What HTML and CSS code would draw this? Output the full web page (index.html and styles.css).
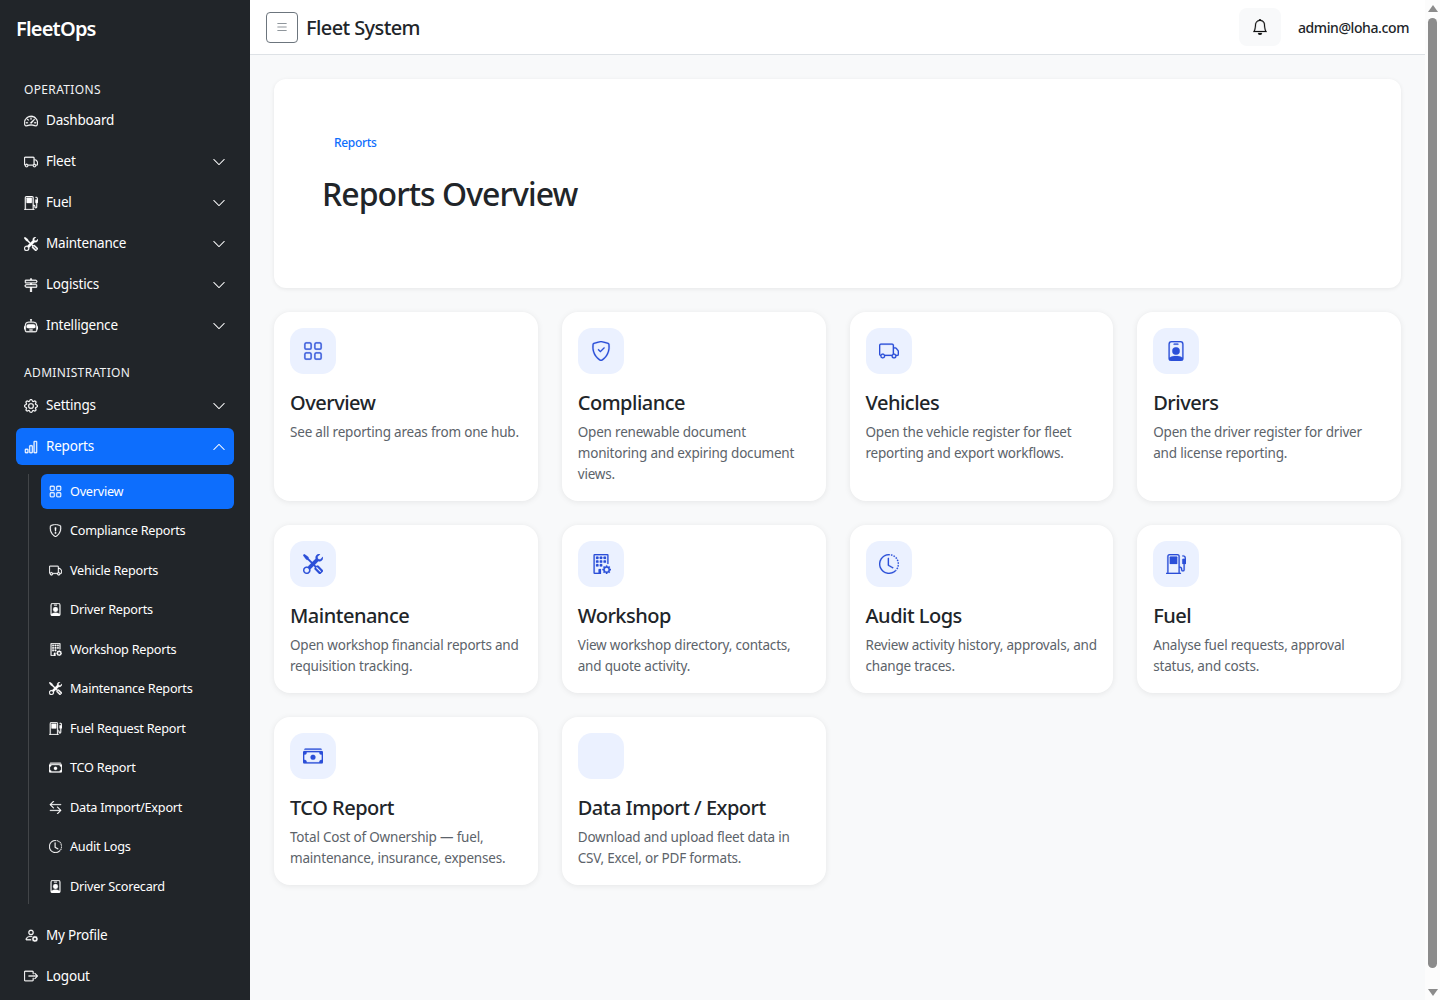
FILE: index.html
```html
<!DOCTYPE html>
<html lang="en">
<head>
    <meta charset="utf-8">
    <title>Reports Overview</title>
    <link rel="stylesheet" href="styles.css">
</head>
<body>
    <svg class="sprite" xmlns="http://www.w3.org/2000/svg">
        <symbol id="i-speedometer" viewBox="0 0 16 16"><path d="M8 4a.5.5 0 0 1 .5.5V6a.5.5 0 0 1-1 0V4.5A.5.5 0 0 1 8 4M3.732 5.732a.5.5 0 0 1 .707 0l.915.914a.5.5 0 1 1-.708.708l-.914-.915a.5.5 0 0 1 0-.707M2 10a.5.5 0 0 1 .5-.5h1.586a.5.5 0 0 1 0 1H2.5A.5.5 0 0 1 2 10m9.5 0a.5.5 0 0 1 .5-.5h1.5a.5.5 0 0 1 0 1H12a.5.5 0 0 1-.5-.5m.754-4.246a.39.39 0 0 0-.527-.02L7.547 9.31a.91.91 0 1 0 1.302 1.258l3.434-4.297a.39.39 0 0 0-.029-.518z"/><path d="M0 10a8 8 0 1 1 15.547 2.661c-.442 1.253-1.845 1.602-2.932 1.25C11.309 13.488 9.475 13 8 13c-1.474 0-3.31.488-4.615.911-1.087.352-2.49.003-2.932-1.25A8 8 0 0 1 0 10m8-7a7 7 0 0 0-6.603 9.329c.203.575.923.876 1.68.63C4.397 12.533 6.358 12 8 12s3.604.532 4.923.96c.757.245 1.477-.056 1.68-.631A7 7 0 0 0 8 3"/></symbol>
        <symbol id="i-truck" viewBox="0 0 16 16"><path d="M0 3.5A1.5 1.5 0 0 1 1.5 2h9A1.5 1.5 0 0 1 12 3.5V5h1.02a1.5 1.5 0 0 1 1.17.563l1.481 1.85a1.5 1.5 0 0 1 .329.938V10.5a1.5 1.5 0 0 1-1.5 1.5H14a2 2 0 1 1-4 0H5a2 2 0 1 1-3.998-.085A1.5 1.5 0 0 1 0 10.5zm1.294 7.456A2 2 0 0 1 4.732 11h5.536a2 2 0 0 1 .732-.732V3.5a.5.5 0 0 0-.5-.5h-9a.5.5 0 0 0-.5.5v7a.5.5 0 0 0 .294.456M12 10a2 2 0 0 1 1.732 1h.768a.5.5 0 0 0 .5-.5V8.35a.5.5 0 0 0-.11-.312l-1.48-1.85A.5.5 0 0 0 13.02 6H12zm-9 1a1 1 0 1 0 0 2 1 1 0 0 0 0-2m9 0a1 1 0 1 0 0 2 1 1 0 0 0 0-2"/></symbol>
        <symbol id="i-fuel" viewBox="0 0 16 16"><path d="M3 2.5a.5.5 0 0 1 .5-.5h5a.5.5 0 0 1 .5.5v5a.5.5 0 0 1-.5.5h-5a.5.5 0 0 1-.5-.5z"/><path d="M1 2a2 2 0 0 1 2-2h6a2 2 0 0 1 2 2v8a2 2 0 0 1 2 2v.5a.5.5 0 0 0 1 0V8h-.5a.5.5 0 0 1-.5-.5V4.375a.5.5 0 0 1 .5-.5h1.495c-.011-.476-.053-.894-.201-1.222a.97.97 0 0 0-.394-.458c-.184-.11-.464-.195-.9-.195a.5.5 0 0 1 0-1q.846-.002 1.412.336c.383.228.634.551.794.907.295.655.294 1.465.294 2.081v3.175a.5.5 0 0 1-.5.501H15v4.5a1.5 1.5 0 0 1-3 0V12a1 1 0 0 0-1-1v4h.5a.5.5 0 0 1 0 1H.5a.5.5 0 0 1 0-1H1zm9 0a1 1 0 0 0-1-1H3a1 1 0 0 0-1 1v13h8z"/></symbol>
        <symbol id="i-tools" viewBox="0 0 16 16"><path d="M1 0 0 1l2.2 3.081a1 1 0 0 0 .815.419h.07a1 1 0 0 1 .708.293l2.675 2.675-2.617 2.654A3.003 3.003 0 0 0 0 13a3 3 0 1 0 5.878-.851l2.654-2.617.968.968-.305.914a1 1 0 0 0 .242 1.023l3.27 3.27a.997.997 0 0 0 1.414 0l1.586-1.586a.997.997 0 0 0 0-1.414l-3.27-3.27a1 1 0 0 0-1.023-.242L10.5 9.5l-.96-.96 2.68-2.643A3.005 3.005 0 0 0 16 3q0-.405-.102-.777l-2.14 2.141L12 4l-.364-1.757L13.777.102a3 3 0 0 0-3.675 3.68L7.462 6.46 4.793 3.793a1 1 0 0 1-.293-.707v-.071a1 1 0 0 0-.419-.814zm9.646 10.646a.5.5 0 0 1 .708 0l2.914 2.915a.5.5 0 0 1-.707.707l-2.915-2.914a.5.5 0 0 1 0-.708M3 11l.471.242.529.026.287.445.445.287.026.529L5 13l-.242.471-.026.529-.445.287-.287.445-.529.026L3 15l-.471-.242L2 14.732l-.287-.445L1.268 14l-.026-.529L1 13l.242-.471.026-.529.445-.287.287-.445.529-.026z"/></symbol>
        <symbol id="i-signpost" viewBox="0 0 16 16"><path d="M7 1.414V2H2a1 1 0 0 0-1 1v2a1 1 0 0 0 1 1h5v1H2.5a1 1 0 0 0-.8.4L.725 8.7a.5.5 0 0 0 0 .6l.975 1.3a1 1 0 0 0 .8.4H7v5h2v-5h5a1 1 0 0 0 1-1V8a1 1 0 0 0-1-1H9V6h4.5a1 1 0 0 0 .8-.4l.975-1.3a.5.5 0 0 0 0-.6l-.975-1.3a1 1 0 0 0-.8-.4H9v-.586a1 1 0 0 0-2 0M13.5 3l.75 1-.75 1H2V3zm.5 5v2H2.5l-.75-1 .75-1z"/></symbol>
        <symbol id="i-robot" viewBox="0 0 16 16"><path d="M6 12.5a.5.5 0 0 1 .5-.5h3a.5.5 0 0 1 0 1h-3a.5.5 0 0 1-.5-.5M3 8.062C3 6.76 4.235 5.765 5.53 5.886a26.6 26.6 0 0 0 4.94 0C11.765 5.765 13 6.76 13 8.062v1.157a.93.93 0 0 1-.765.935c-.845.147-2.34.346-4.235.346s-3.39-.2-4.235-.346A.93.93 0 0 1 3 9.219z"/><path d="M8.5 1.866a1 1 0 1 0-1 0V3h-2A4.5 4.5 0 0 0 1 7.5V8a1 1 0 0 0-1 1v2a1 1 0 0 0 1 1v1a2 2 0 0 0 2 2h10a2 2 0 0 0 2-2v-1a1 1 0 0 0 1-1V9a1 1 0 0 0-1-1v-.5A4.5 4.5 0 0 0 10.5 3h-2zM14 7.5V13a1 1 0 0 1-1 1H3a1 1 0 0 1-1-1V7.5A3.5 3.5 0 0 1 5.5 4h5A3.5 3.5 0 0 1 14 7.5"/></symbol>
        <symbol id="i-gear" viewBox="0 0 16 16"><path d="M8 4.754a3.246 3.246 0 1 0 0 6.492 3.246 3.246 0 0 0 0-6.492M5.754 8a2.246 2.246 0 1 1 4.492 0 2.246 2.246 0 0 1-4.492 0"/><path d="M9.796 1.343c-.527-1.79-3.065-1.79-3.592 0l-.094.319a.873.873 0 0 1-1.255.52l-.292-.16c-1.64-.892-3.433.902-2.54 2.541l.159.292a.873.873 0 0 1-.52 1.255l-.319.094c-1.79.527-1.79 3.065 0 3.592l.319.094a.873.873 0 0 1 .52 1.255l-.16.292c-.892 1.64.901 3.434 2.541 2.54l.292-.159a.873.873 0 0 1 1.255.52l.094.319c.527 1.79 3.065 1.79 3.592 0l.094-.319a.873.873 0 0 1 1.255-.52l.292.16c1.64.893 3.434-.902 2.54-2.541l-.159-.292a.873.873 0 0 1 .52-1.255l.319-.094c1.79-.527 1.79-3.065 0-3.592l-.319-.094a.873.873 0 0 1-.52-1.255l.16-.292c.893-1.64-.902-3.433-2.541-2.54l-.292.159a.873.873 0 0 1-1.255-.52zm-2.633.283c.246-.835 1.428-.835 1.674 0l.094.319a1.873 1.873 0 0 0 2.693 1.115l.291-.16c.764-.415 1.6.42 1.184 1.185l-.159.292a1.873 1.873 0 0 0 1.116 2.692l.318.094c.835.246.835 1.428 0 1.674l-.319.094a1.873 1.873 0 0 0-1.115 2.693l.16.291c.415.764-.42 1.6-1.185 1.184l-.291-.159a1.873 1.873 0 0 0-2.693 1.116l-.094.318c-.246.835-1.428.835-1.674 0l-.094-.319a1.873 1.873 0 0 0-2.692-1.115l-.292.16c-.764.415-1.6-.42-1.184-1.185l.159-.291A1.873 1.873 0 0 0 1.945 8.93l-.319-.094c-.835-.246-.835-1.428 0-1.674l.319-.094A1.873 1.873 0 0 0 3.06 4.377l-.16-.292c-.415-.764.42-1.6 1.185-1.184l.292.159a1.873 1.873 0 0 0 2.692-1.115z"/></symbol>
        <symbol id="i-bars" viewBox="0 0 16 16"><path d="M4 11H2v3h2zm5-4H7v7h2zm5-5v12h-2V2zm-2-1a1 1 0 0 0-1 1v12a1 1 0 0 0 1 1h2a1 1 0 0 0 1-1V2a1 1 0 0 0-1-1zM6 7a1 1 0 0 1 1-1h2a1 1 0 0 1 1 1v7a1 1 0 0 1-1 1H7a1 1 0 0 1-1-1zm-5 4a1 1 0 0 1 1-1h2a1 1 0 0 1 1 1v3a1 1 0 0 1-1 1H2a1 1 0 0 1-1-1z"/></symbol>
        <symbol id="i-grid" viewBox="0 0 16 16"><path d="M1 2.5A1.5 1.5 0 0 1 2.5 1h3A1.5 1.5 0 0 1 7 2.5v3A1.5 1.5 0 0 1 5.5 7h-3A1.5 1.5 0 0 1 1 5.5zM2.5 2a.5.5 0 0 0-.5.5v3a.5.5 0 0 0 .5.5h3a.5.5 0 0 0 .5-.5v-3a.5.5 0 0 0-.5-.5zm6.5.5A1.5 1.5 0 0 1 10.5 1h3A1.5 1.5 0 0 1 15 2.5v3A1.5 1.5 0 0 1 13.5 7h-3A1.5 1.5 0 0 1 9 5.5zm1.5-.5a.5.5 0 0 0-.5.5v3a.5.5 0 0 0 .5.5h3a.5.5 0 0 0 .5-.5v-3a.5.5 0 0 0-.5-.5zM1 10.5A1.5 1.5 0 0 1 2.5 9h3A1.5 1.5 0 0 1 7 10.5v3A1.5 1.5 0 0 1 5.5 15h-3A1.5 1.5 0 0 1 1 13.5zm1.5-.5a.5.5 0 0 0-.5.5v3a.5.5 0 0 0 .5.5h3a.5.5 0 0 0 .5-.5v-3a.5.5 0 0 0-.5-.5zm6.5.5A1.5 1.5 0 0 1 10.5 9h3a1.5 1.5 0 0 1 1.5 1.5v3a1.5 1.5 0 0 1-1.5 1.5h-3A1.5 1.5 0 0 1 9 13.5zm1.5-.5a.5.5 0 0 0-.5.5v3a.5.5 0 0 0 .5.5h3a.5.5 0 0 0 .5-.5v-3a.5.5 0 0 0-.5-.5z"/></symbol>
        <symbol id="i-shield-alert" viewBox="0 0 16 16"><path d="M5.338 1.59a61 61 0 0 0-2.837.856.48.48 0 0 0-.328.39c-.554 4.157.726 7.19 2.253 9.188a10.7 10.7 0 0 0 2.287 2.233c.346.244.652.42.893.533q.18.085.293.118a1 1 0 0 0 .101.025 1 1 0 0 0 .1-.025q.114-.034.294-.118c.24-.113.547-.29.893-.533a10.7 10.7 0 0 0 2.287-2.233c1.527-1.997 2.807-5.031 2.253-9.188a.48.48 0 0 0-.328-.39c-.651-.213-1.75-.56-2.837-.855C9.552 1.29 8.531 1.067 8 1.067c-.53 0-1.552.223-2.662.524zM5.072.56C6.157.265 7.31 0 8 0s1.843.265 2.928.56c1.11.3 2.229.655 2.887.87a1.54 1.54 0 0 1 1.044 1.262c.596 4.477-.787 7.795-2.465 9.99a11.8 11.8 0 0 1-2.517 2.453 7 7 0 0 1-1.048.625c-.28.132-.581.24-.829.24s-.548-.108-.829-.24a7 7 0 0 1-1.048-.625 11.8 11.8 0 0 1-2.517-2.453C1.928 10.487.545 7.169 1.141 2.692A1.54 1.54 0 0 1 2.185 1.43 63 63 0 0 1 5.072.56"/><path d="M7.001 11a1 1 0 1 1 2 0 1 1 0 0 1-2 0M7.1 4.995a.905.905 0 1 1 1.8 0l-.35 3.507a.553.553 0 0 1-1.1 0z"/></symbol>
        <symbol id="i-shield-check" viewBox="0 0 16 16"><path d="M5.338 1.59a61 61 0 0 0-2.837.856.48.48 0 0 0-.328.39c-.554 4.157.726 7.19 2.253 9.188a10.7 10.7 0 0 0 2.287 2.233c.346.244.652.42.893.533q.18.085.293.118a1 1 0 0 0 .101.025 1 1 0 0 0 .1-.025q.114-.034.294-.118c.24-.113.547-.29.893-.533a10.7 10.7 0 0 0 2.287-2.233c1.527-1.997 2.807-5.031 2.253-9.188a.48.48 0 0 0-.328-.39c-.651-.213-1.75-.56-2.837-.855C9.552 1.29 8.531 1.067 8 1.067c-.53 0-1.552.223-2.662.524zM5.072.56C6.157.265 7.31 0 8 0s1.843.265 2.928.56c1.11.3 2.229.655 2.887.87a1.54 1.54 0 0 1 1.044 1.262c.596 4.477-.787 7.795-2.465 9.99a11.8 11.8 0 0 1-2.517 2.453 7 7 0 0 1-1.048.625c-.28.132-.581.24-.829.24s-.548-.108-.829-.24a7 7 0 0 1-1.048-.625 11.8 11.8 0 0 1-2.517-2.453C1.928 10.487.545 7.169 1.141 2.692A1.54 1.54 0 0 1 2.185 1.43 63 63 0 0 1 5.072.56"/><path d="M10.854 5.146a.5.5 0 0 1 0 .708l-3 3a.5.5 0 0 1-.708 0l-1.5-1.5a.5.5 0 1 1 .708-.708L7.5 7.793l2.646-2.647a.5.5 0 0 1 .708 0"/></symbol>
        <symbol id="i-badge" viewBox="0 0 16 16"><path d="M6.5 2a.5.5 0 0 0 0 1h3a.5.5 0 0 0 0-1zM11 8a3 3 0 1 1-6 0 3 3 0 0 1 6 0"/><path d="M4.5 0A2.5 2.5 0 0 0 2 2.5V14a2 2 0 0 0 2 2h8a2 2 0 0 0 2-2V2.5A2.5 2.5 0 0 0 11.5 0zM3 2.5A1.5 1.5 0 0 1 4.5 1h7A1.5 1.5 0 0 1 13 2.5v10.795a4.2 4.2 0 0 0-.776-.492C11.392 12.387 10.063 12 8 12s-3.392.387-4.224.803a4.2 4.2 0 0 0-.776.492z"/></symbol>
        <symbol id="i-building-gear" viewBox="0 0 16 16"><path d="M2 1a1 1 0 0 1 1-1h10a1 1 0 0 1 1 1v6.5a.5.5 0 0 1-1 0V1H3v14h3v-2.5a.5.5 0 0 1 .5-.5H8v4H3a1 1 0 0 1-1-1z"/><rect x="4" y="2" width="2" height="2" rx=".5"/><rect x="7" y="2" width="2" height="2" rx=".5"/><rect x="10" y="2" width="2" height="2" rx=".5"/><rect x="4" y="5" width="2" height="2" rx=".5"/><rect x="7" y="5" width="2" height="2" rx=".5"/><rect x="10" y="5" width="2" height="2" rx=".5"/><rect x="4" y="8" width="2" height="2" rx=".5"/><rect x="7" y="8" width="2" height="2" rx=".5"/><path d="M11.886 9.46c.18-.613 1.048-.613 1.229 0l.043.148a.64.64 0 0 0 .921.382l.136-.074c.561-.306 1.175.308.87.869l-.075.136a.64.64 0 0 0 .382.92l.149.045c.612.18.612 1.048 0 1.229l-.15.043a.64.64 0 0 0-.38.921l.074.136c.305.561-.309 1.175-.87.87l-.136-.075a.64.64 0 0 0-.92.382l-.045.149c-.18.612-1.048.612-1.229 0l-.043-.15a.64.64 0 0 0-.921-.38l-.136.074c-.561.305-1.175-.309-.87-.87l.075-.136a.64.64 0 0 0-.382-.92l-.148-.045c-.613-.18-.613-1.048 0-1.229l.148-.043a.64.64 0 0 0 .382-.921l-.074-.136c-.306-.561.308-1.175.869-.87l.136.075a.64.64 0 0 0 .92-.382zM14 12.5a1.5 1.5 0 1 0-3 0 1.5 1.5 0 0 0 3 0"/></symbol>
        <symbol id="i-clock" viewBox="0 0 16 16"><path d="M8.515 1.019A7 7 0 0 0 8 1V0a8 8 0 0 1 .589.022zm2.004.45a7 7 0 0 0-.985-.299l.219-.976q.576.129 1.126.342zm1.37.71a7 7 0 0 0-.439-.27l.493-.87a8 8 0 0 1 .979.654l-.615.789a7 7 0 0 0-.418-.302zm1.834 1.79a7 7 0 0 0-.653-.796l.724-.69q.406.429.747.91zm.744 1.352a7 7 0 0 0-.214-.468l.893-.45a8 8 0 0 1 .45 1.088l-.95.313a7 7 0 0 0-.179-.483m.53 2.507a7 7 0 0 0-.1-1.025l.985-.17q.1.58.116 1.17zm-.131 1.538q.05-.254.081-.51l.993.123a8 8 0 0 1-.23 1.155l-.964-.267q.069-.247.12-.501m-.952 2.379q.276-.436.486-.908l.914.405q-.24.54-.555 1.038zm-.964 1.205q.183-.183.35-.378l.758.653a8 8 0 0 1-.401.432z"/><path d="M8 1a7 7 0 1 0 4.95 11.95l.707.707A8.001 8.001 0 1 1 8 0z"/><path d="M7.5 3a.5.5 0 0 1 .5.5v5.21l3.248 1.856a.5.5 0 0 1-.496.868l-3.5-2A.5.5 0 0 1 7 9V3.5a.5.5 0 0 1 .5-.5"/></symbol>
        <symbol id="i-cash" viewBox="0 0 16 16"><path d="M1 3a1 1 0 0 1 1-1h12a1 1 0 0 1 1 1zm7 8a2 2 0 1 0 0-4 2 2 0 0 0 0 4"/><path d="M0 5a1 1 0 0 1 1-1h14a1 1 0 0 1 1 1v8a1 1 0 0 1-1 1H1a1 1 0 0 1-1-1zm3 0a2 2 0 0 1-2 2v4a2 2 0 0 1 2 2h10a2 2 0 0 1 2-2V7a2 2 0 0 1-2-2z"/></symbol>
        <symbol id="i-swap" viewBox="0 0 16 16"><path d="M1 11.5a.5.5 0 0 0 .5.5h11.793l-3.147 3.146a.5.5 0 0 0 .708.708l4-4a.5.5 0 0 0 0-.708l-4-4a.5.5 0 0 0-.708.708L13.293 11H1.5a.5.5 0 0 0-.5.5m14-7a.5.5 0 0 1-.5.5H2.707l3.147 3.146a.5.5 0 1 1-.708.708l-4-4a.5.5 0 0 1 0-.708l4-4a.5.5 0 1 1 .708.708L2.707 4H14.5a.5.5 0 0 1 .5.5"/></symbol>
        <symbol id="i-person-gear" viewBox="0 0 16 16"><path d="M11 5a3 3 0 1 1-6 0 3 3 0 0 1 6 0M8 7a2 2 0 1 0 0-4 2 2 0 0 0 0 4m.256 7a4.5 4.5 0 0 1-.229-1.004H3c.001-.246.154-.986.832-1.664C4.484 10.68 5.711 10 8 10q.39 0 .74.025c.226-.341.496-.65.804-.918Q8.844 9.002 8 9c-5 0-6 3-6 4s1 1 1 1z"/><path d="M11.886 9.46c.18-.613 1.048-.613 1.229 0l.043.148a.64.64 0 0 0 .921.382l.136-.074c.561-.306 1.175.308.87.869l-.075.136a.64.64 0 0 0 .382.92l.149.045c.612.18.612 1.048 0 1.229l-.15.043a.64.64 0 0 0-.38.921l.074.136c.305.561-.309 1.175-.87.87l-.136-.075a.64.64 0 0 0-.92.382l-.045.149c-.18.612-1.048.612-1.229 0l-.043-.15a.64.64 0 0 0-.921-.38l-.136.074c-.561.305-1.175-.309-.87-.87l.075-.136a.64.64 0 0 0-.382-.92l-.148-.045c-.613-.18-.613-1.048 0-1.229l.148-.043a.64.64 0 0 0 .382-.921l-.074-.136c-.306-.561.308-1.175.869-.87l.136.075a.64.64 0 0 0 .92-.382zM14 12.5a1.5 1.5 0 1 0-3 0 1.5 1.5 0 0 0 3 0"/></symbol>
        <symbol id="i-logout" viewBox="0 0 16 16"><path d="M10 12.5a.5.5 0 0 1-.5.5h-8a.5.5 0 0 1-.5-.5v-9a.5.5 0 0 1 .5-.5h8a.5.5 0 0 1 .5.5v2a.5.5 0 0 0 1 0v-2A1.5 1.5 0 0 0 9.5 2h-8A1.5 1.5 0 0 0 0 3.5v9A1.5 1.5 0 0 0 1.5 14h8a1.5 1.5 0 0 0 1.5-1.5v-2a.5.5 0 0 0-1 0z"/><path d="M15.854 8.354a.5.5 0 0 0 0-.708l-3-3a.5.5 0 0 0-.708.708L14.293 7.5H5.5a.5.5 0 0 0 0 1h8.793l-2.147 2.146a.5.5 0 0 0 .708.708z"/></symbol>
        <symbol id="i-bell" viewBox="0 0 16 16"><path d="M8 16a2 2 0 0 0 2-2H6a2 2 0 0 0 2 2M8 1.918l-.797.161A4 4 0 0 0 4 6c0 .628-.134 2.197-.459 3.742-.16.767-.376 1.566-.663 2.258h10.244c-.287-.692-.502-1.49-.663-2.258C12.134 8.197 12 6.628 12 6a4 4 0 0 0-3.203-3.92zM14.22 12c.223.447.481.801.78 1H1c.299-.199.557-.553.78-1C2.68 10.2 3 6.88 3 6c0-2.42 1.72-4.44 4.005-4.901a1 1 0 1 1 1.99 0A5 5 0 0 1 13 6c0 .88.32 4.2 1.22 6"/></symbol>
        <symbol id="i-chevron" viewBox="0 0 16 16"><path d="M1.646 4.646a.5.5 0 0 1 .708 0L8 10.293l5.646-5.647a.5.5 0 0 1 .708.708l-6 6a.5.5 0 0 1-.708 0l-6-6a.5.5 0 0 1 0-.708"/></symbol>
        <symbol id="i-list" viewBox="0 0 16 16"><path d="M2.5 12a.5.5 0 0 1 .5-.5h10a.5.5 0 0 1 0 1H3a.5.5 0 0 1-.5-.5m0-4a.5.5 0 0 1 .5-.5h10a.5.5 0 0 1 0 1H3a.5.5 0 0 1-.5-.5m0-4a.5.5 0 0 1 .5-.5h10a.5.5 0 0 1 0 1H3a.5.5 0 0 1-.5-.5"/></symbol>
    </svg>

    <aside class="sidebar">
        <div class="brand">FleetOps</div>

        <div class="nav-label">OPERATIONS</div>
        <ul class="nav">
            <li><a class="nav-link"><svg class="nav-icon"><use href="#i-speedometer"/></svg>Dashboard</a></li>
            <li><a class="nav-link"><svg class="nav-icon"><use href="#i-truck"/></svg>Fleet<svg class="chevron"><use href="#i-chevron"/></svg></a></li>
            <li><a class="nav-link"><svg class="nav-icon"><use href="#i-fuel"/></svg>Fuel<svg class="chevron"><use href="#i-chevron"/></svg></a></li>
            <li><a class="nav-link"><svg class="nav-icon"><use href="#i-tools"/></svg>Maintenance<svg class="chevron"><use href="#i-chevron"/></svg></a></li>
            <li><a class="nav-link"><svg class="nav-icon"><use href="#i-signpost"/></svg>Logistics<svg class="chevron"><use href="#i-chevron"/></svg></a></li>
            <li><a class="nav-link"><svg class="nav-icon"><use href="#i-robot"/></svg>Intelligence<svg class="chevron"><use href="#i-chevron"/></svg></a></li>
        </ul>

        <div class="nav-label nav-label-admin">ADMINISTRATION</div>
        <ul class="nav">
            <li><a class="nav-link"><svg class="nav-icon"><use href="#i-gear"/></svg>Settings<svg class="chevron"><use href="#i-chevron"/></svg></a></li>
            <li>
                <a class="nav-link active"><svg class="nav-icon"><use href="#i-bars"/></svg>Reports<svg class="chevron chevron-up"><use href="#i-chevron"/></svg></a>
                <ul class="subnav">
                    <li><a class="sub-link active"><svg class="sub-icon"><use href="#i-grid"/></svg>Overview</a></li>
                    <li><a class="sub-link"><svg class="sub-icon"><use href="#i-shield-alert"/></svg>Compliance Reports</a></li>
                    <li><a class="sub-link"><svg class="sub-icon"><use href="#i-truck"/></svg>Vehicle Reports</a></li>
                    <li><a class="sub-link"><svg class="sub-icon"><use href="#i-badge"/></svg>Driver Reports</a></li>
                    <li><a class="sub-link"><svg class="sub-icon"><use href="#i-building-gear"/></svg>Workshop Reports</a></li>
                    <li><a class="sub-link"><svg class="sub-icon"><use href="#i-tools"/></svg>Maintenance Reports</a></li>
                    <li><a class="sub-link"><svg class="sub-icon"><use href="#i-fuel"/></svg>Fuel Request Report</a></li>
                    <li><a class="sub-link"><svg class="sub-icon"><use href="#i-cash"/></svg>TCO Report</a></li>
                    <li><a class="sub-link"><svg class="sub-icon"><use href="#i-swap"/></svg>Data Import/Export</a></li>
                    <li><a class="sub-link"><svg class="sub-icon"><use href="#i-clock"/></svg>Audit Logs</a></li>
                    <li><a class="sub-link"><svg class="sub-icon"><use href="#i-badge"/></svg>Driver Scorecard</a></li>
                </ul>
            </li>
        </ul>

        <ul class="nav nav-bottom">
            <li><a class="nav-link"><svg class="nav-icon"><use href="#i-person-gear"/></svg>My Profile</a></li>
            <li><a class="nav-link"><svg class="nav-icon"><use href="#i-logout"/></svg>Logout</a></li>
        </ul>
    </aside>

    <div class="main">
        <header class="topbar">
            <button class="toggler"><svg class="toggler-icon"><use href="#i-list"/></svg></button>
            <div class="topbar-title">Fleet System</div>
            <div class="bell"><svg class="bell-icon"><use href="#i-bell"/></svg></div>
            <div class="user">admin@loha.com</div>
        </header>

        <main class="content">
            <section class="hero">
                <div class="crumb">Reports</div>
                <h1 class="hero-title">Reports Overview</h1>
            </section>

            <section class="card-grid">
                <article class="card">
                    <div class="card-icon"><svg><use href="#i-grid"/></svg></div>
                    <h2 class="card-title">Overview</h2>
                    <p class="card-text">See all reporting areas from one hub.</p>
                </article>
                <article class="card">
                    <div class="card-icon"><svg><use href="#i-shield-check"/></svg></div>
                    <h2 class="card-title">Compliance</h2>
                    <p class="card-text">Open renewable document monitoring and expiring document views.</p>
                </article>
                <article class="card">
                    <div class="card-icon"><svg><use href="#i-truck"/></svg></div>
                    <h2 class="card-title">Vehicles</h2>
                    <p class="card-text">Open the vehicle register for fleet reporting and export workflows.</p>
                </article>
                <article class="card">
                    <div class="card-icon"><svg><use href="#i-badge"/></svg></div>
                    <h2 class="card-title">Drivers</h2>
                    <p class="card-text">Open the driver register for driver and license reporting.</p>
                </article>
                <article class="card">
                    <div class="card-icon"><svg><use href="#i-tools"/></svg></div>
                    <h2 class="card-title">Maintenance</h2>
                    <p class="card-text">Open workshop financial reports and requisition tracking.</p>
                </article>
                <article class="card">
                    <div class="card-icon"><svg><use href="#i-building-gear"/></svg></div>
                    <h2 class="card-title">Workshop</h2>
                    <p class="card-text">View workshop directory, contacts, and quote activity.</p>
                </article>
                <article class="card">
                    <div class="card-icon"><svg><use href="#i-clock"/></svg></div>
                    <h2 class="card-title">Audit Logs</h2>
                    <p class="card-text">Review activity history, approvals, and change traces.</p>
                </article>
                <article class="card">
                    <div class="card-icon"><svg><use href="#i-fuel"/></svg></div>
                    <h2 class="card-title">Fuel</h2>
                    <p class="card-text">Analyse fuel requests, approval status, and costs.</p>
                </article>
                <article class="card">
                    <div class="card-icon"><svg><use href="#i-cash"/></svg></div>
                    <h2 class="card-title">TCO Report</h2>
                    <p class="card-text">Total Cost of Ownership — fuel, maintenance, insurance, expenses.</p>
                </article>
                <article class="card">
                    <div class="card-icon"></div>
                    <h2 class="card-title">Data Import / Export</h2>
                    <p class="card-text">Download and upload fleet data in CSV, Excel, or PDF formats.</p>
                </article>
            </section>
        </main>
    </div>

    <div class="scrollbar">
        <div class="scroll-arrow"></div>
        <div class="scroll-thumb"></div>
        <div class="scroll-arrow scroll-arrow-down"></div>
    </div>
</body>
</html>
```

FILE: styles.css
```css
* {
    box-sizing: border-box;
}

html, body {
    height: 100%;
}

body {
    display: flex;
    height: 1000px;
    margin: 0;
    overflow: hidden;
    background-color: #f8f9fa;
    color: #212529;
    font-family: 'Noto Sans', 'Open Sans', sans-serif;
    font-size: 14px;
    line-height: 1.5;
}

.sprite {
    display: none;
}

ul {
    margin: 0;
    padding: 0;
    list-style: none;
}

/* sidebar */
.sidebar {
    flex: 0 0 250px;
    height: 1000px;
    padding: 14px 16px 0;
    overflow: hidden;
    background-color: #212529;
    color: #fff;
}

.brand {
    height: 30px;
    margin-bottom: 37px;
    font-size: 20px;
    font-weight: 600;
    line-height: 30px;
    letter-spacing: -0.8px;
}

.nav-label {
    height: 18px;
    margin: 0 8px 3px;
    font-size: 12px;
    line-height: 18px;
    letter-spacing: 0.35px;
    color: #f1f3f5;
}

.nav-label-admin {
    margin-top: 20px;
    margin-bottom: 5px;
}

.nav {
    display: flex;
    flex-direction: column;
    gap: 4px;
}

.nav-bottom {
    margin-top: 12.5px;
}

.nav-link {
    display: flex;
    align-items: center;
    gap: 8px;
    height: 37px;
    padding: 8px;
    border-radius: 6px;
    color: #fff;
    font-size: 13.5px;
    letter-spacing: -0.2px;
}

.nav-link.active {
    background-color: #0d6efd;
}

.nav-icon {
    flex: none;
    width: 14px;
    height: 14px;
    fill: currentColor;
    stroke: currentColor;
    stroke-width: 0.35;
}

.chevron {
    flex: none;
    width: 14px;
    height: 14px;
    margin-left: auto;
    fill: currentColor;
}

.chevron-up {
    transform: rotate(180deg);
}

.subnav {
    display: flex;
    flex-direction: column;
    gap: 4px;
    margin: 8.5px 0 0 12px;
    padding-left: 12px;
    border-left: 1px solid rgba(255, 255, 255, 0.15);
}

.sub-link {
    display: flex;
    align-items: center;
    gap: 8px;
    height: 35.5px;
    padding: 8px;
    border-radius: 6px;
    color: #fff;
    font-size: 12.7px;
    line-height: 19.5px;
    letter-spacing: -0.25px;
}

.sub-link.active {
    background-color: #0d6efd;
}

.sub-icon {
    flex: none;
    width: 13px;
    height: 13px;
    fill: currentColor;
    stroke: currentColor;
    stroke-width: 0.35;
}

/* topbar */
.main {
    flex: 1;
    min-width: 0;
}

.topbar {
    display: flex;
    align-items: center;
    height: 55px;
    padding: 0 16px;
    border-bottom: 1px solid #dee2e6;
    background-color: #fff;
}

.toggler {
    display: flex;
    align-items: center;
    justify-content: center;
    width: 32px;
    height: 31px;
    margin-right: 8px;
    padding: 0;
    border: 1px solid #6c757d;
    border-radius: 4px;
    background: none;
}

.toggler-icon {
    width: 14px;
    height: 14px;
    fill: #8f969c;
}

.topbar-title {
    flex: 1;
    margin-top: 2px;
    font-size: 20px;
    font-weight: 500;
    letter-spacing: -0.6px;
}

.bell {
    display: flex;
    align-items: center;
    justify-content: center;
    width: 42px;
    height: 38px;
    margin-right: 17px;
    border-radius: 8px;
    background-color: #f8f9fa;
}

.bell-icon {
    width: 16px;
    height: 16px;
    fill: #111;
    stroke: #111;
    stroke-width: 0.2;
}

.user {
    font-weight: 500;
    letter-spacing: -0.4px;
}

/* page content */
.content {
    padding: 24px;
}

.hero {
    height: 209px;
    margin-bottom: 24px;
    padding: 55px 48px 0;
    border-radius: 12px;
    background-color: #fff;
    box-shadow: 0 1px 4px rgba(0, 0, 0, 0.08);
}

.crumb {
    margin-bottom: 23px;
    padding-left: 12px;
    color: #0d6efd;
    font-size: 12px;
    font-weight: 500;
    line-height: 18px;
    letter-spacing: -0.3px;
}

.hero-title {
    margin: 0;
    font-size: 32px;
    font-weight: 500;
    line-height: 38px;
    letter-spacing: -0.95px;
}

.card-grid {
    display: grid;
    grid-template-columns: repeat(4, 1fr);
    gap: 24px;
}

.card {
    padding: 16px;
    border-radius: 16px;
    background-color: #fff;
    box-shadow: 0 1px 6px rgba(0, 0, 0, 0.08);
}

.card-icon {
    display: flex;
    align-items: center;
    justify-content: center;
    width: 46px;
    height: 46px;
    border-radius: 14px;
    background-color: #ebf1ff;
}

.card-icon svg {
    width: 20px;
    height: 20px;
    fill: #2b4fd8;
    stroke: #2b4fd8;
    stroke-width: 0.15;
}

.card-title {
    margin: 17px 0 7px;
    font-size: 20px;
    font-weight: 500;
    line-height: 24px;
    letter-spacing: -0.5px;
}

.card-text {
    margin: 0;
    color: #5c636a;
    font-size: 13.5px;
    line-height: 21px;
    letter-spacing: -0.2px;
}

/* page scrollbar */
.scrollbar {
    display: flex;
    flex: 0 0 15px;
    flex-direction: column;
    align-items: center;
    padding: 5px 0 4px;
    background-color: #fcfcfc;
}

.scroll-arrow {
    width: 0;
    height: 0;
    border-right: 5px solid transparent;
    border-bottom: 7px solid #8b8b8b;
    border-left: 5px solid transparent;
}

.scroll-arrow-down {
    border-top: 7px solid #8b8b8b;
    border-bottom: 0;
}

.scroll-thumb {
    flex: 1;
    width: 9px;
    margin: 6px 0 21px;
    border-radius: 5px;
    background-color: #8b8b8b;
}
```
